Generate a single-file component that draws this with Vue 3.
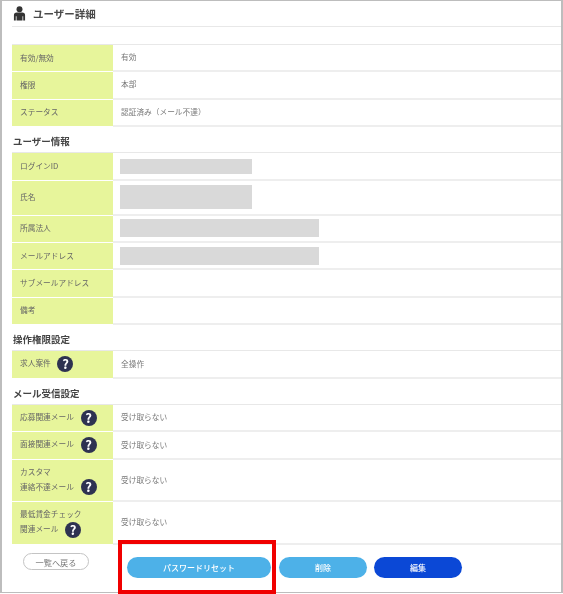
<template>
  <div class="page">
    <div class="frame">
      <h1 class="title">
        <svg class="person" viewBox="0 0 14 16" width="13" height="15">
          <circle cx="7" cy="3.400" r="3.200" fill="#333" />
          <path d="M1 15.500V10q0-3 3-3h6q3 0 3 3v5.500h-2V11h-.8v4.500H3.800V11H3v4.500z" fill="#333" />
        </svg>
        ユーザー詳細
      </h1>

      <template v-for="section in sections" :key="section.id">
        <h2 v-if="section.heading" class="heading">{{ section.heading }}</h2>
        <div class="table" :class="section.id">
          <div v-for="row in section.rows" :key="row.label" class="row" :class="row.size">
            <div class="label">
              <span class="label-text">
                <template v-if="row.lead">{{ row.lead }}<br></template>
                {{ row.label }}
                <span v-if="row.help" class="help">?</span>
              </span>
            </div>
            <div class="value">
              <div v-if="row.mask" class="mask" :class="row.mask"></div>
              <span v-else class="value-text">{{ row.value }}</span>
            </div>
          </div>
        </div>
      </template>

      <div class="footer">
        <button class="back">一覧へ戻る</button>
        <div class="actions">
          <button class="pill reset">パスワードリセット</button>
          <button class="pill remove">削除</button>
          <button class="pill edit">編集</button>
        </div>
      </div>
    </div>
    <div class="highlight"></div>
  </div>
</template>

<script setup>
const sections = [
  {
    id: 'status',
    rows: [
      { label: '有効/無効', value: '有効' },
      { label: '権限', value: '本部' },
      { label: 'ステータス', value: '認証済み（メール不達）' },
    ],
  },
  {
    id: 'user',
    heading: 'ユーザー情報',
    rows: [
      { label: 'ログインID', mask: 'short thin' },
      { label: '氏名', mask: 'short thick', size: 'mid' },
      { label: '所属法人', mask: 'wide' },
      { label: 'メールアドレス', mask: 'wide' },
      { label: 'サブメールアドレス', value: '' },
      { label: '備考', value: '' },
    ],
  },
  {
    id: 'perm',
    heading: '操作権限設定',
    rows: [{ label: '求人案件', value: '全操作', help: true }],
  },
  {
    id: 'mail',
    heading: 'メール受信設定',
    rows: [
      { label: '応募関連メール', value: '受け取らない', help: true },
      { label: '面接関連メール', value: '受け取らない', help: true },
      { lead: 'カスタマ', label: '連絡不達メール', value: '受け取らない', help: true, size: 'tall' },
      { lead: '最低賃金チェック', label: '関連メール', value: '受け取らない', help: true, size: 'tall' },
    ],
  },
]
</script>

<style>
html, body {
  background: #fff;
}
</style>

<style scoped>
.page {
  position: relative;
  width: 563px;
  height: 594px;
  overflow: hidden;
  font-family: "Noto Sans CJK JP", "Noto Sans", sans-serif;
  color: #666;
}
.frame {
  box-sizing: border-box;
  width: 563px;
  height: 593px;
  padding: 0 0 0 10px;
  border: 1px solid #bdbdbd;
  border-left-width: 2px;
  border-right-width: 2px;
  background: #fff;
  filter: blur(0.3px);
}
.title {
  display: flex;
  align-items: center;
  gap: 7px;
  box-sizing: border-box;
  height: 26px;
  margin: 0;
  padding: 0 0 1px 1px;
  border-bottom: 1px solid #e8e8e8;
  font-size: 10.500px;
  font-weight: 700;
  color: #4a4a4a;
}
.person {
  margin-top: 1px;
}
.heading {
  box-sizing: border-box;
  height: 25.500px;
  margin: 0;
  padding: 4px 0 0 1px;
  font-size: 9.500px;
  line-height: 21px;
  font-weight: 700;
  color: #444;
}
.table {
  border-top: 1px solid #e8e8e8;
}
.status {
  margin-top: 17px;
}
.row {
  display: flex;
  height: 27.300px;
  border-bottom: 2px solid #eee;
  box-sizing: border-box;
  font-size: 7.700px;
}
.row.mid {
  height: 35px;
}
.row.tall {
  height: 42.500px;
}
.label {
  display: flex;
  align-items: center;
  box-sizing: border-box;
  width: 101px;
  margin-bottom: -2px;
  padding: 0 0 2px 8px;
  border-bottom: 1px solid #fff;
  background: #e7f59b;
  line-height: 15px;
  color: #666;
}
.value {
  display: flex;
  align-items: center;
  flex: 1;
  padding-left: 8px;
  color: #777;
}
.value-text {
  margin-bottom: 2px;
}
.help {
  display: inline-block;
  width: 16px;
  height: 16px;
  margin-left: 5px;
  border-radius: 50%;
  background: #2e3251;
  color: #fff;
  font-size: 13px;
  font-weight: 700;
  line-height: 16px;
  text-align: center;
  vertical-align: middle;
}
.mask {
  margin-left: -1px;
  background: #d9d9d9;
}
.short {
  width: 132px;
}
.wide {
  width: 199px;
  height: 18px;
}
.thin {
  height: 15px;
}
.thick {
  height: 24px;
}
.footer {
  display: flex;
  align-items: flex-start;
  padding: 8.500px 0 0 11px;
}
.back {
  box-sizing: border-box;
  width: 66px;
  height: 17px;
  padding: 0;
  border: 1px solid #c4c4c4;
  border-radius: 9px;
  background: #fff;
  font: inherit;
  font-size: 8.200px;
  line-height: 14px;
  color: #777;
}
.actions {
  display: flex;
  gap: 8px;
  margin: 4px 0 0 38px;
}
.pill {
  width: 88px;
  height: 21px;
  padding: 0;
  border: none;
  border-radius: 11px;
  font: inherit;
  font-size: 8px;
  font-weight: 500;
  color: #fff;
}
.reset {
  width: 144px;
  background: #4db1e8;
}
.remove {
  background: #4db1e8;
}
.edit {
  margin-left: -1px;
  background: #0b48d6;
}
.highlight {
  position: absolute;
  left: 118px;
  top: 540px;
  box-sizing: border-box;
  width: 158px;
  height: 54px;
  border: 4px solid #f00000;
}
</style>
